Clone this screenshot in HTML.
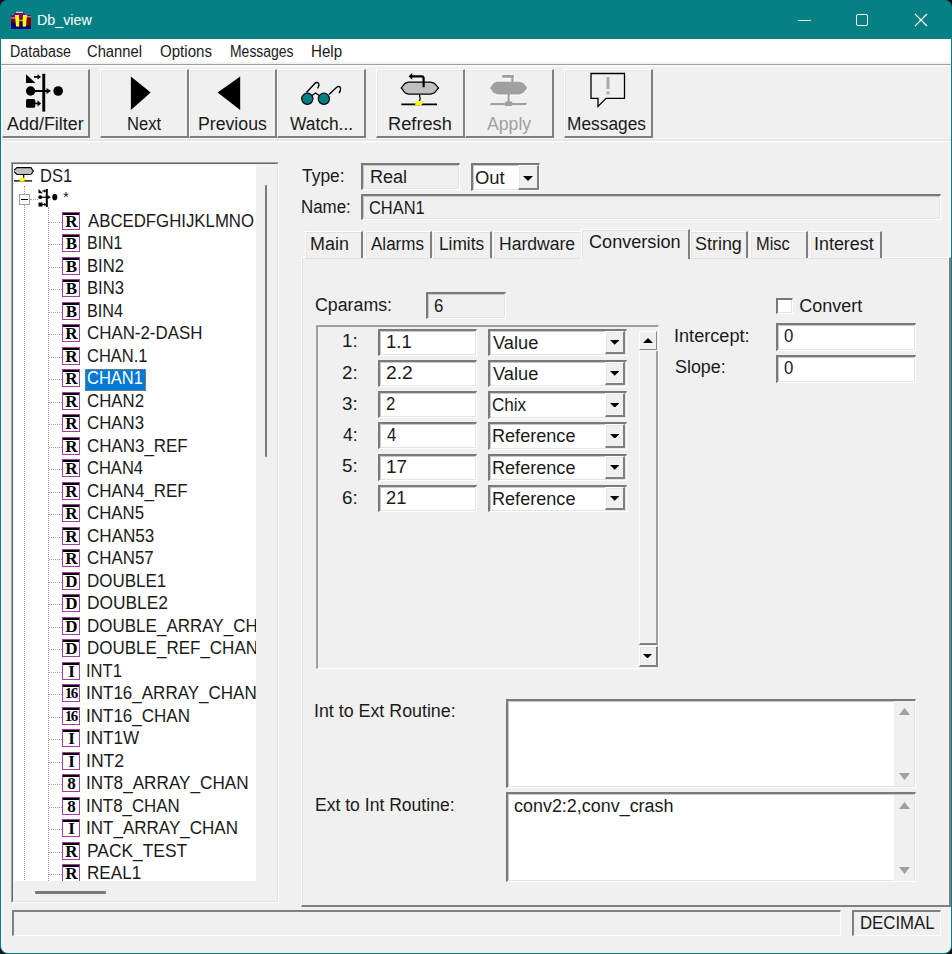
<!DOCTYPE html>
<html><head><meta charset="utf-8"><style>
html,body{margin:0;padding:0;width:952px;height:954px;overflow:hidden;background:#141418}
.t{position:absolute;font-family:"Liberation Sans", sans-serif;white-space:pre}
#win{position:absolute;left:0;top:0;width:952px;height:954px;box-sizing:border-box;background:#f0f0f0;border:1px solid #058084;border-radius:8px}
#title{position:absolute;left:0;top:0;width:952px;height:39px;background:#058084;border-radius:8px 8px 0 0}
</style></head><body>
<div id="win"></div><div id="title"></div><svg style="position:absolute;left:8px;top:8px" width="28" height="24" viewBox="0 0 28 24">
<rect x="3" y="7" width="20" height="14" fill="#800000"/>
<rect x="3" y="7" width="5" height="3" fill="#800080"/>
<rect x="3" y="9.6" width="5" height="0.9" fill="#f0c0f0"/>
<path d="M8 4H15L17.5 7H19.5V9H6V7z" fill="#800080"/>
<rect x="8" y="3.8" width="7" height="1" fill="#f8e8f8"/>
<rect x="19" y="7" width="4" height="1.6" fill="#800080"/>
<rect x="19" y="8.4" width="4" height="0.8" fill="#f0c0f0"/>
<path d="M3 21V14.5H8V18.5H19V17.8H23V21z" fill="#000080"/>
<rect x="11.2" y="10" width="3.5" height="1.8" fill="#800000"/><rect x="11.2" y="11.8" width="3.5" height="0.8" fill="#fff"/>
<rect x="11.2" y="12.6" width="3.5" height="0.9" fill="#60c040"/>
<rect x="11.2" y="13.5" width="3.5" height="5" fill="#000080"/>
<path d="M7 7H11.2V18.5H8z M14.7 7H19L18 18.5H14.7z" fill="#ffff00"/>
<rect x="11.2" y="7" width="3.5" height="3" fill="#800080"/>
</svg><div class="t" style="left:36.75px;top:11.60px;font-size:15px;line-height:15px;color:#fff;transform:scaleX(0.9526);transform-origin:0 0;">Db_view</div><div style="position:absolute;left:798px;top:19.5px;width:13px;height:1px;box-sizing:border-box;background:#fff"></div><div style="position:absolute;left:856px;top:14px;width:12px;height:12px;box-sizing:border-box;border:1px solid #fff;border-radius:2px"></div><svg style="position:absolute;left:914px;top:13px" width="14" height="14" viewBox="0 0 14 14"><path d="M1 1L13 13M13 1L1 13" stroke="#fff" stroke-width="1.1"/></svg><div style="position:absolute;left:1px;top:39px;width:950px;height:25px;box-sizing:border-box;background:linear-gradient(#fff 0px,#fff 21.5px,#f0f0f0 24.5px)"></div><div style="position:absolute;left:1px;top:64px;width:950px;height:1px;box-sizing:border-box;background:#a0a0a0"></div><div class="t" style="left:9.51px;top:43.76px;font-size:16px;line-height:16px;color:#1a1a1a;transform:scaleX(0.8896);transform-origin:0 0;">Database</div><div class="t" style="left:86.98px;top:43.76px;font-size:16px;line-height:16px;color:#1a1a1a;transform:scaleX(0.9224);transform-origin:0 0;">Channel</div><div class="t" style="left:159.76px;top:43.76px;font-size:16px;line-height:16px;color:#1a1a1a;transform:scaleX(0.9426);transform-origin:0 0;">Options</div><div class="t" style="left:229.63px;top:43.76px;font-size:16px;line-height:16px;color:#1a1a1a;transform:scaleX(0.8722);transform-origin:0 0;">Messages</div><div class="t" style="left:310.85px;top:43.76px;font-size:16px;line-height:16px;color:#1a1a1a;transform:scaleX(0.9452);transform-origin:0 0;">Help</div><div style="position:absolute;left:1px;top:65px;width:950px;height:1.5px;box-sizing:border-box;background:#f8f8f8"></div><div style="position:absolute;left:1px;top:138px;width:950px;height:1px;box-sizing:border-box;background:#f8f8f8"></div><div style="position:absolute;left:1px;top:139px;width:950px;height:2px;box-sizing:border-box;background:#e6e6e6"></div><div style="position:absolute;left:1px;top:141px;width:950px;height:1px;box-sizing:border-box;background:#fff"></div><div style="position:absolute;left:2px;top:69px;width:88px;height:69px;box-sizing:border-box;background:#f0f0f0;border-top:1px solid #fff;border-left:1px solid #fff;border-right:2px solid #808080;border-bottom:2px solid #808080;box-shadow:inset 1px 1px 0 #e8e8e8"></div><div class="t" style="left:6.80px;top:114.76px;font-size:18px;line-height:18px;color:#1a1a1a;transform:scaleX(0.9961);transform-origin:0 0;">Add/Filter</div><div style="position:absolute;left:100px;top:69px;width:89px;height:69px;box-sizing:border-box;background:#f0f0f0;border-top:1px solid #fff;border-left:1px solid #fff;border-right:2px solid #808080;border-bottom:2px solid #808080;box-shadow:inset 1px 1px 0 #e8e8e8"></div><div class="t" style="left:126.58px;top:114.76px;font-size:18px;line-height:18px;color:#1a1a1a;transform:scaleX(0.9222);transform-origin:0 0;">Next</div><div style="position:absolute;left:189px;top:69px;width:88px;height:69px;box-sizing:border-box;background:#f0f0f0;border-top:1px solid #fff;border-left:1px solid #fff;border-right:2px solid #808080;border-bottom:2px solid #808080;box-shadow:inset 1px 1px 0 #e8e8e8"></div><div class="t" style="left:198.02px;top:114.76px;font-size:18px;line-height:18px;color:#1a1a1a;transform:scaleX(0.9826);transform-origin:0 0;">Previous</div><div style="position:absolute;left:277px;top:69px;width:89px;height:69px;box-sizing:border-box;background:#f0f0f0;border-top:1px solid #fff;border-left:1px solid #fff;border-right:2px solid #808080;border-bottom:2px solid #808080;box-shadow:inset 1px 1px 0 #e8e8e8"></div><div class="t" style="left:290.20px;top:114.76px;font-size:18px;line-height:18px;color:#1a1a1a;transform:scaleX(0.9656);transform-origin:0 0;">Watch...</div><div style="position:absolute;left:376px;top:69px;width:89px;height:69px;box-sizing:border-box;background:#f0f0f0;border-top:1px solid #fff;border-left:1px solid #fff;border-right:2px solid #808080;border-bottom:2px solid #808080;box-shadow:inset 1px 1px 0 #e8e8e8"></div><div class="t" style="left:387.79px;top:114.76px;font-size:18px;line-height:18px;color:#1a1a1a;transform:scaleX(1.0131);transform-origin:0 0;">Refresh</div><div style="position:absolute;left:465px;top:69px;width:89px;height:69px;box-sizing:border-box;background:#f0f0f0;border-top:1px solid #fff;border-left:1px solid #fff;border-right:2px solid #808080;border-bottom:2px solid #808080;box-shadow:inset 1px 1px 0 #e8e8e8"></div><div class="t" style="left:487.40px;top:114.76px;font-size:18px;line-height:18px;color:#a0a0a0;transform:scaleX(0.9800);transform-origin:0 0;">Apply</div><div style="position:absolute;left:564px;top:69px;width:89px;height:69px;box-sizing:border-box;background:#f0f0f0;border-top:1px solid #fff;border-left:1px solid #fff;border-right:2px solid #808080;border-bottom:2px solid #808080;box-shadow:inset 1px 1px 0 #e8e8e8"></div><div class="t" style="left:567.24px;top:114.76px;font-size:18px;line-height:18px;color:#1a1a1a;transform:scaleX(0.9630);transform-origin:0 0;">Messages</div><svg style="position:absolute;left:20px;top:70px" width="50" height="42" viewBox="0 0 50 42">
<path d="M6 4.2L15.5 12.9H6z" fill="#000"/>
<path d="M14 6.9h4.5" stroke="#000" stroke-width="1.8"/><path d="M17.5 4.3l3.6 2.6-3.6 2.6z" fill="#000"/>
<rect x="22.3" y="3.8" width="2.9" height="37.8" fill="#000"/>
<circle cx="10.6" cy="21" r="4.7" fill="#000"/>
<path d="M14 21h14" stroke="#000" stroke-width="2"/><path d="M26.5 17.9l4.5 3.1-4.5 3.1z" fill="#000"/>
<circle cx="38.2" cy="21" r="4.8" fill="#000"/>
<rect x="6" y="29.1" width="9.2" height="8.7" rx="1.5" fill="#000"/>
<path d="M14 33.4h5" stroke="#000" stroke-width="1.8"/><path d="M17.5 30.3l3.6 3.1-3.6 3.1z" fill="#000"/>
</svg><svg style="position:absolute;left:130px;top:76px" width="24" height="36" viewBox="0 0 24 36"><path d="M0.9 0.6L20.7 16.5L0.9 33.9z" fill="#000"/></svg><svg style="position:absolute;left:217px;top:76px" width="24" height="36" viewBox="0 0 24 36"><path d="M0.6 16.5L23.2 0.6V33.9z" fill="#000"/></svg><svg style="position:absolute;left:296px;top:80px" width="50" height="30" viewBox="0 0 50 30">
<path d="M10.5 12.5L19 3.2Q21.5 1.5 22.8 4Q23.5 6.5 21.5 8.5" fill="none" stroke="#000" stroke-width="1.4"/>
<path d="M33 14.5L41 7Q43.5 5.5 44.5 8Q45 10.5 43 13" fill="none" stroke="#000" stroke-width="1.4"/>
<path d="M16 15.5L19.6 13L23.2 15.5" fill="none" stroke="#000" stroke-width="1.3"/>
<circle cx="11.3" cy="18.8" r="5.6" fill="#008080" stroke="#000" stroke-width="1.2"/>
<circle cx="27.9" cy="18.8" r="5.6" fill="#008080" stroke="#000" stroke-width="1.2"/>
</svg><svg style="position:absolute;left:396px;top:70px" width="50" height="40" viewBox="0 0 50 40">
<path d="M12.1 12.1H34.7L38.5 13.3L42.5 17.9L38.5 22.8L34.7 24.2H12.1L9 22.8L5.3 17.9L9 13.3z" fill="#c0c0c0" stroke="#000" stroke-width="1.3"/>
<path d="M27.6 17.3V8.3Q27.6 6.3 25.6 6.3H15.5" fill="none" stroke="#000" stroke-width="2.2"/>
<path d="M16.2 2.9L12.6 6.3L16.2 9.7z" fill="#000"/>
<path d="M23.6 24.5Q23.6 27 24.2 28.5Q24.5 30 23 31" fill="none" stroke="#000" stroke-width="1.3"/>
<path d="M5.3 34.4H41" stroke="#000" stroke-width="1.8"/>
<path d="M20.5 31.2H27.8L25.3 35.3H18.9z" fill="#ffff00"/>
</svg><svg style="position:absolute;left:485px;top:70px" width="50" height="40" viewBox="0 0 50 40">
<g fill="#fff" transform="translate(1,1)"><path d="M11.3 11.8H34.7L38.5 13.3L42.3 17.9L38.5 22.8L34.7 24.4H12.6L8.5 22.8L5 17.9L8.5 13.3z"/>
<rect x="26.3" y="5" width="2.3" height="7.5"/><rect x="17.3" y="5" width="11.3" height="2.8"/>
<rect x="22.6" y="24" width="2.1" height="8.5"/>
<path d="M6 33.1H42L41 35.2H5z"/>
<rect x="20.2" y="31.5" width="7.1" height="4.7"/></g><g fill="#a0a0a0"><path d="M11.3 11.8H34.7L38.5 13.3L42.3 17.9L38.5 22.8L34.7 24.4H12.6L8.5 22.8L5 17.9L8.5 13.3z"/>
<rect x="26.3" y="5" width="2.3" height="7.5"/><rect x="17.3" y="5" width="11.3" height="2.8"/>
<rect x="22.6" y="24" width="2.1" height="8.5"/>
<path d="M6 33.1H42L41 35.2H5z"/>
<rect x="20.2" y="31.5" width="7.1" height="4.7"/></g>
</svg><svg style="position:absolute;left:585px;top:70px" width="50" height="40" viewBox="0 0 50 40">
<path d="M6 3.5H39.5V28.3H21L13 36.5V28.3H6z" fill="none" stroke="#000" stroke-width="1.3"/>
<rect x="21.5" y="7" width="3" height="12" fill="#a8a8a8"/>
<rect x="21.5" y="21.5" width="3" height="3" fill="#a8a8a8"/>
</svg><div style="position:absolute;left:11px;top:161.5px;width:267.5px;height:741.5px;box-sizing:border-box;background:#f0f0f0;border-top:2px solid #a0a0a0;border-left:2px solid #a0a0a0;border-right:2px solid #fafafa;border-bottom:2px solid #fafafa"></div><div style="position:absolute;left:12px;top:162.5px;width:265.5px;height:739.5px;box-sizing:border-box;border-top:1.5px solid #696969;border-left:1px solid #696969;border-right:1px solid #e3e3e3;border-bottom:1px solid #e3e3e3"></div><div id="tree" style="position:absolute;left:14px;top:165px;width:242px;height:716px;background:#fff;overflow:hidden"><svg style="position:absolute;left:-2px;top:0px" width="24" height="20" viewBox="0 0 24 20">
<path d="M5 2.6H18.9L21.4 6.1L18.9 9.5H5L1.2 6.1z" fill="#c0c0c0" stroke="#000" stroke-width="1.1"/>
<path d="M11.7 9.5V13" stroke="#000" stroke-width="1.2"/>
<path d="M1.2 15.9H20.1" stroke="#000" stroke-width="1.3"/>
<path d="M8.3 12.7H13.2L12.4 16.5H7.5z" fill="#ffff00"/></svg><div class="t" style="left:26.08px;top:2.26px;font-size:18px;line-height:18px;color:#1a1a1a;transform:scaleX(0.9152);transform-origin:0 0;">DS1</div><div style="position:absolute;left:10px;top:21px;width:1px;height:716px;box-sizing:border-box;border-left:1px dotted #a0a0a0"></div><div style="position:absolute;left:34px;top:42px;width:1px;height:700px;box-sizing:border-box;border-left:1px dotted #a0a0a0"></div><div style="position:absolute;left:5px;top:29px;width:11px;height:11px;box-sizing:border-box;background:#fff;border:1px solid #a0a0a0"></div><div style="position:absolute;left:7px;top:34px;width:7px;height:1.3px;box-sizing:border-box;background:#000"></div><div style="position:absolute;left:16px;top:34px;width:8px;height:1px;box-sizing:border-box;border-top:1px dotted #a0a0a0"></div><svg style="position:absolute;left:22px;top:22px" width="24" height="22" viewBox="0 0 24 22">
<path d="M2.5 2L6.8 6.2H2.5z" fill="#000"/>
<path d="M6.3 4h2.5" stroke="#000" stroke-width="1.2"/><path d="M8.2 2.3l2.2 1.7-2.2 1.7z" fill="#000"/>
<rect x="9.8" y="2" width="2" height="18" fill="#000"/>
<circle cx="4.2" cy="10.2" r="1.9" fill="#000"/>
<path d="M5 10.2h8" stroke="#000" stroke-width="1.2"/><path d="M12.2 8.3l2.5 1.9-2.5 1.9z" fill="#000"/>
<ellipse cx="18.8" cy="10.2" rx="2.5" ry="3.1" fill="#000"/>
<rect x="2.5" y="15.5" width="4" height="4" fill="#000"/>
<path d="M6 17.5h3" stroke="#000" stroke-width="1.2"/><path d="M8.2 15.8l2.2 1.7-2.2 1.7z" fill="#000"/></svg><div class="t" style="left:49.00px;top:23.80px;font-size:15px;line-height:15px;color:#1a1a1a;">*</div><div style="position:absolute;left:35px;top:56.69999999999999px;width:13px;height:1px;box-sizing:border-box;border-top:1px dotted #a0a0a0"></div><div style="position:absolute;left:48px;top:46.69999999999999px;width:18px;height:18px;box-sizing:border-box;background:#fff;border:1.5px solid #a040a0;box-shadow:inset 0 2px 0 #000"></div><div style="position:absolute;left:48.5px;top:46.499999999999986px;width:18px;height:18px;text-align:center;font-family:'Liberation Serif',serif;font-weight:bold;font-size:17px;line-height:19px;color:#000;letter-spacing:0;text-indent:0">R</div><div class="t" style="left:73.90px;top:46.96px;font-size:18px;line-height:18px;color:#1a1a1a;transform:scaleX(0.9328);transform-origin:0 0;">ABCEDFGHIJKLMNO</div><div style="position:absolute;left:35px;top:79.19999999999999px;width:13px;height:1px;box-sizing:border-box;border-top:1px dotted #a0a0a0"></div><div style="position:absolute;left:48px;top:69.19999999999999px;width:18px;height:18px;box-sizing:border-box;background:#fff;border:1.5px solid #a040a0;box-shadow:inset 0 2px 0 #000"></div><div style="position:absolute;left:48.5px;top:68.99999999999999px;width:18px;height:18px;text-align:center;font-family:'Liberation Serif',serif;font-weight:bold;font-size:17px;line-height:19px;color:#000;letter-spacing:0;text-indent:0">B</div><div class="t" style="left:73.01px;top:68.96px;font-size:18px;line-height:18px;color:#1a1a1a;transform:scaleX(0.8868);transform-origin:0 0;">BIN1</div><div style="position:absolute;left:35px;top:101.69999999999999px;width:13px;height:1px;box-sizing:border-box;border-top:1px dotted #a0a0a0"></div><div style="position:absolute;left:48px;top:91.69999999999999px;width:18px;height:18px;box-sizing:border-box;background:#fff;border:1.5px solid #a040a0;box-shadow:inset 0 2px 0 #000"></div><div style="position:absolute;left:48.5px;top:91.49999999999999px;width:18px;height:18px;text-align:center;font-family:'Liberation Serif',serif;font-weight:bold;font-size:17px;line-height:19px;color:#000;letter-spacing:0;text-indent:0">B</div><div class="t" style="left:72.97px;top:91.96px;font-size:18px;line-height:18px;color:#1a1a1a;transform:scaleX(0.9263);transform-origin:0 0;">BIN2</div><div style="position:absolute;left:35px;top:124.19999999999999px;width:13px;height:1px;box-sizing:border-box;border-top:1px dotted #a0a0a0"></div><div style="position:absolute;left:48px;top:114.19999999999999px;width:18px;height:18px;box-sizing:border-box;background:#fff;border:1.5px solid #a040a0;box-shadow:inset 0 2px 0 #000"></div><div style="position:absolute;left:48.5px;top:113.99999999999999px;width:18px;height:18px;text-align:center;font-family:'Liberation Serif',serif;font-weight:bold;font-size:17px;line-height:19px;color:#000;letter-spacing:0;text-indent:0">B</div><div class="t" style="left:72.97px;top:113.96px;font-size:18px;line-height:18px;color:#1a1a1a;transform:scaleX(0.9263);transform-origin:0 0;">BIN3</div><div style="position:absolute;left:35px;top:146.7px;width:13px;height:1px;box-sizing:border-box;border-top:1px dotted #a0a0a0"></div><div style="position:absolute;left:48px;top:136.7px;width:18px;height:18px;box-sizing:border-box;background:#fff;border:1.5px solid #a040a0;box-shadow:inset 0 2px 0 #000"></div><div style="position:absolute;left:48.5px;top:136.5px;width:18px;height:18px;text-align:center;font-family:'Liberation Serif',serif;font-weight:bold;font-size:17px;line-height:19px;color:#000;letter-spacing:0;text-indent:0">B</div><div class="t" style="left:73.00px;top:136.96px;font-size:18px;line-height:18px;color:#1a1a1a;transform:scaleX(0.9026);transform-origin:0 0;">BIN4</div><div style="position:absolute;left:35px;top:169.2px;width:13px;height:1px;box-sizing:border-box;border-top:1px dotted #a0a0a0"></div><div style="position:absolute;left:48px;top:159.2px;width:18px;height:18px;box-sizing:border-box;background:#fff;border:1.5px solid #a040a0;box-shadow:inset 0 2px 0 #000"></div><div style="position:absolute;left:48.5px;top:159.0px;width:18px;height:18px;text-align:center;font-family:'Liberation Serif',serif;font-weight:bold;font-size:17px;line-height:19px;color:#000;letter-spacing:0;text-indent:0">R</div><div class="t" style="left:72.96px;top:158.96px;font-size:18px;line-height:18px;color:#1a1a1a;transform:scaleX(0.9380);transform-origin:0 0;">CHAN-2-DASH</div><div style="position:absolute;left:35px;top:191.7px;width:13px;height:1px;box-sizing:border-box;border-top:1px dotted #a0a0a0"></div><div style="position:absolute;left:48px;top:181.7px;width:18px;height:18px;box-sizing:border-box;background:#fff;border:1.5px solid #a040a0;box-shadow:inset 0 2px 0 #000"></div><div style="position:absolute;left:48.5px;top:181.5px;width:18px;height:18px;text-align:center;font-family:'Liberation Serif',serif;font-weight:bold;font-size:17px;line-height:19px;color:#000;letter-spacing:0;text-indent:0">R</div><div class="t" style="left:72.98px;top:181.96px;font-size:18px;line-height:18px;color:#1a1a1a;transform:scaleX(0.9156);transform-origin:0 0;">CHAN.1</div><div style="position:absolute;left:35px;top:214.2px;width:13px;height:1px;box-sizing:border-box;border-top:1px dotted #a0a0a0"></div><div style="position:absolute;left:48px;top:204.2px;width:18px;height:18px;box-sizing:border-box;background:#fff;border:1.5px solid #a040a0;box-shadow:inset 0 2px 0 #000"></div><div style="position:absolute;left:48.5px;top:204.0px;width:18px;height:18px;text-align:center;font-family:'Liberation Serif',serif;font-weight:bold;font-size:17px;line-height:19px;color:#000;letter-spacing:0;text-indent:0">R</div><div style="position:absolute;left:71.3px;top:203.7px;width:61px;height:22.7px;box-sizing:border-box;background:#0078d7;outline:1px dotted #c08040;outline-offset:-1px"></div><div class="t" style="left:72.98px;top:203.96px;font-size:18px;line-height:18px;color:#fff;transform:scaleX(0.9169);transform-origin:0 0;">CHAN1</div><div style="position:absolute;left:35px;top:236.7px;width:13px;height:1px;box-sizing:border-box;border-top:1px dotted #a0a0a0"></div><div style="position:absolute;left:48px;top:226.7px;width:18px;height:18px;box-sizing:border-box;background:#fff;border:1.5px solid #a040a0;box-shadow:inset 0 2px 0 #000"></div><div style="position:absolute;left:48.5px;top:226.5px;width:18px;height:18px;text-align:center;font-family:'Liberation Serif',serif;font-weight:bold;font-size:17px;line-height:19px;color:#000;letter-spacing:0;text-indent:0">R</div><div class="t" style="left:72.97px;top:226.96px;font-size:18px;line-height:18px;color:#1a1a1a;transform:scaleX(0.9339);transform-origin:0 0;">CHAN2</div><div style="position:absolute;left:35px;top:259.2px;width:13px;height:1px;box-sizing:border-box;border-top:1px dotted #a0a0a0"></div><div style="position:absolute;left:48px;top:249.2px;width:18px;height:18px;box-sizing:border-box;background:#fff;border:1.5px solid #a040a0;box-shadow:inset 0 2px 0 #000"></div><div style="position:absolute;left:48.5px;top:249.0px;width:18px;height:18px;text-align:center;font-family:'Liberation Serif',serif;font-weight:bold;font-size:17px;line-height:19px;color:#000;letter-spacing:0;text-indent:0">R</div><div class="t" style="left:72.97px;top:248.96px;font-size:18px;line-height:18px;color:#1a1a1a;transform:scaleX(0.9339);transform-origin:0 0;">CHAN3</div><div style="position:absolute;left:35px;top:281.7px;width:13px;height:1px;box-sizing:border-box;border-top:1px dotted #a0a0a0"></div><div style="position:absolute;left:48px;top:271.7px;width:18px;height:18px;box-sizing:border-box;background:#fff;border:1.5px solid #a040a0;box-shadow:inset 0 2px 0 #000"></div><div style="position:absolute;left:48.5px;top:271.5px;width:18px;height:18px;text-align:center;font-family:'Liberation Serif',serif;font-weight:bold;font-size:17px;line-height:19px;color:#000;letter-spacing:0;text-indent:0">R</div><div class="t" style="left:72.96px;top:271.96px;font-size:18px;line-height:18px;color:#1a1a1a;transform:scaleX(0.9406);transform-origin:0 0;">CHAN3_REF</div><div style="position:absolute;left:35px;top:304.2px;width:13px;height:1px;box-sizing:border-box;border-top:1px dotted #a0a0a0"></div><div style="position:absolute;left:48px;top:294.2px;width:18px;height:18px;box-sizing:border-box;background:#fff;border:1.5px solid #a040a0;box-shadow:inset 0 2px 0 #000"></div><div style="position:absolute;left:48.5px;top:294.0px;width:18px;height:18px;text-align:center;font-family:'Liberation Serif',serif;font-weight:bold;font-size:17px;line-height:19px;color:#000;letter-spacing:0;text-indent:0">R</div><div class="t" style="left:72.98px;top:293.96px;font-size:18px;line-height:18px;color:#1a1a1a;transform:scaleX(0.9183);transform-origin:0 0;">CHAN4</div><div style="position:absolute;left:35px;top:326.7px;width:13px;height:1px;box-sizing:border-box;border-top:1px dotted #a0a0a0"></div><div style="position:absolute;left:48px;top:316.7px;width:18px;height:18px;box-sizing:border-box;background:#fff;border:1.5px solid #a040a0;box-shadow:inset 0 2px 0 #000"></div><div style="position:absolute;left:48.5px;top:316.5px;width:18px;height:18px;text-align:center;font-family:'Liberation Serif',serif;font-weight:bold;font-size:17px;line-height:19px;color:#000;letter-spacing:0;text-indent:0">R</div><div class="t" style="left:72.96px;top:316.96px;font-size:18px;line-height:18px;color:#1a1a1a;transform:scaleX(0.9406);transform-origin:0 0;">CHAN4_REF</div><div style="position:absolute;left:35px;top:349.20000000000005px;width:13px;height:1px;box-sizing:border-box;border-top:1px dotted #a0a0a0"></div><div style="position:absolute;left:48px;top:339.2px;width:18px;height:18px;box-sizing:border-box;background:#fff;border:1.5px solid #a040a0;box-shadow:inset 0 2px 0 #000"></div><div style="position:absolute;left:48.5px;top:339.0px;width:18px;height:18px;text-align:center;font-family:'Liberation Serif',serif;font-weight:bold;font-size:17px;line-height:19px;color:#000;letter-spacing:0;text-indent:0">R</div><div class="t" style="left:72.97px;top:338.96px;font-size:18px;line-height:18px;color:#1a1a1a;transform:scaleX(0.9339);transform-origin:0 0;">CHAN5</div><div style="position:absolute;left:35px;top:371.70000000000005px;width:13px;height:1px;box-sizing:border-box;border-top:1px dotted #a0a0a0"></div><div style="position:absolute;left:48px;top:361.70000000000005px;width:18px;height:18px;box-sizing:border-box;background:#fff;border:1.5px solid #a040a0;box-shadow:inset 0 2px 0 #000"></div><div style="position:absolute;left:48.5px;top:361.50000000000006px;width:18px;height:18px;text-align:center;font-family:'Liberation Serif',serif;font-weight:bold;font-size:17px;line-height:19px;color:#000;letter-spacing:0;text-indent:0">R</div><div class="t" style="left:72.95px;top:361.96px;font-size:18px;line-height:18px;color:#1a1a1a;transform:scaleX(0.9478);transform-origin:0 0;">CHAN53</div><div style="position:absolute;left:35px;top:394.20000000000005px;width:13px;height:1px;box-sizing:border-box;border-top:1px dotted #a0a0a0"></div><div style="position:absolute;left:48px;top:384.20000000000005px;width:18px;height:18px;box-sizing:border-box;background:#fff;border:1.5px solid #a040a0;box-shadow:inset 0 2px 0 #000"></div><div style="position:absolute;left:48.5px;top:384.00000000000006px;width:18px;height:18px;text-align:center;font-family:'Liberation Serif',serif;font-weight:bold;font-size:17px;line-height:19px;color:#000;letter-spacing:0;text-indent:0">R</div><div class="t" style="left:72.96px;top:383.96px;font-size:18px;line-height:18px;color:#1a1a1a;transform:scaleX(0.9391);transform-origin:0 0;">CHAN57</div><div style="position:absolute;left:35px;top:416.70000000000005px;width:13px;height:1px;box-sizing:border-box;border-top:1px dotted #a0a0a0"></div><div style="position:absolute;left:48px;top:406.70000000000005px;width:18px;height:18px;box-sizing:border-box;background:#fff;border:1.5px solid #a040a0;box-shadow:inset 0 2px 0 #000"></div><div style="position:absolute;left:48.5px;top:406.50000000000006px;width:18px;height:18px;text-align:center;font-family:'Liberation Serif',serif;font-weight:bold;font-size:17px;line-height:19px;color:#000;letter-spacing:0;text-indent:0">D</div><div class="t" style="left:72.96px;top:406.96px;font-size:18px;line-height:18px;color:#1a1a1a;transform:scaleX(0.9439);transform-origin:0 0;">DOUBLE1</div><div style="position:absolute;left:35px;top:439.20000000000005px;width:13px;height:1px;box-sizing:border-box;border-top:1px dotted #a0a0a0"></div><div style="position:absolute;left:48px;top:429.20000000000005px;width:18px;height:18px;box-sizing:border-box;background:#fff;border:1.5px solid #a040a0;box-shadow:inset 0 2px 0 #000"></div><div style="position:absolute;left:48.5px;top:429.00000000000006px;width:18px;height:18px;text-align:center;font-family:'Liberation Serif',serif;font-weight:bold;font-size:17px;line-height:19px;color:#000;letter-spacing:0;text-indent:0">D</div><div class="t" style="left:72.94px;top:428.96px;font-size:18px;line-height:18px;color:#1a1a1a;transform:scaleX(0.9634);transform-origin:0 0;">DOUBLE2</div><div style="position:absolute;left:35px;top:461.70000000000005px;width:13px;height:1px;box-sizing:border-box;border-top:1px dotted #a0a0a0"></div><div style="position:absolute;left:48px;top:451.70000000000005px;width:18px;height:18px;box-sizing:border-box;background:#fff;border:1.5px solid #a040a0;box-shadow:inset 0 2px 0 #000"></div><div style="position:absolute;left:48.5px;top:451.50000000000006px;width:18px;height:18px;text-align:center;font-family:'Liberation Serif',serif;font-weight:bold;font-size:17px;line-height:19px;color:#000;letter-spacing:0;text-indent:0">D</div><div class="t" style="left:72.96px;top:451.96px;font-size:18px;line-height:18px;color:#1a1a1a;transform:scaleX(0.9446);transform-origin:0 0;">DOUBLE_ARRAY_CHAN</div><div style="position:absolute;left:35px;top:484.20000000000005px;width:13px;height:1px;box-sizing:border-box;border-top:1px dotted #a0a0a0"></div><div style="position:absolute;left:48px;top:474.20000000000005px;width:18px;height:18px;box-sizing:border-box;background:#fff;border:1.5px solid #a040a0;box-shadow:inset 0 2px 0 #000"></div><div style="position:absolute;left:48.5px;top:474.00000000000006px;width:18px;height:18px;text-align:center;font-family:'Liberation Serif',serif;font-weight:bold;font-size:17px;line-height:19px;color:#000;letter-spacing:0;text-indent:0">D</div><div class="t" style="left:72.96px;top:473.96px;font-size:18px;line-height:18px;color:#1a1a1a;transform:scaleX(0.9446);transform-origin:0 0;">DOUBLE_REF_CHAN</div><div style="position:absolute;left:35px;top:506.70000000000005px;width:13px;height:1px;box-sizing:border-box;border-top:1px dotted #a0a0a0"></div><div style="position:absolute;left:48px;top:496.70000000000005px;width:18px;height:18px;box-sizing:border-box;background:#fff;border:1.5px solid #a040a0;box-shadow:inset 0 2px 0 #000"></div><div style="position:absolute;left:48.5px;top:496.50000000000006px;width:18px;height:18px;text-align:center;font-family:'Liberation Serif',serif;font-weight:bold;font-size:17px;line-height:19px;color:#000;letter-spacing:0;text-indent:0">I</div><div class="t" style="left:72.06px;top:496.96px;font-size:18px;line-height:18px;color:#1a1a1a;transform:scaleX(0.9222);transform-origin:0 0;">INT1</div><div style="position:absolute;left:35px;top:529.2px;width:13px;height:1px;box-sizing:border-box;border-top:1px dotted #a0a0a0"></div><div style="position:absolute;left:48px;top:519.2px;width:18px;height:18px;box-sizing:border-box;background:#fff;border:1.5px solid #a040a0;box-shadow:inset 0 2px 0 #000"></div><div style="position:absolute;left:48.5px;top:519.0px;width:18px;height:18px;text-align:center;font-family:'Liberation Serif',serif;font-weight:bold;font-size:15px;line-height:19px;color:#000;letter-spacing:-1.5px;text-indent:-1.5px">16</div><div class="t" style="left:72.01px;top:518.96px;font-size:18px;line-height:18px;color:#1a1a1a;transform:scaleX(0.9446);transform-origin:0 0;">INT16_ARRAY_CHAN</div><div style="position:absolute;left:35px;top:551.7px;width:13px;height:1px;box-sizing:border-box;border-top:1px dotted #a0a0a0"></div><div style="position:absolute;left:48px;top:541.7px;width:18px;height:18px;box-sizing:border-box;background:#fff;border:1.5px solid #a040a0;box-shadow:inset 0 2px 0 #000"></div><div style="position:absolute;left:48.5px;top:541.5px;width:18px;height:18px;text-align:center;font-family:'Liberation Serif',serif;font-weight:bold;font-size:15px;line-height:19px;color:#000;letter-spacing:-1.5px;text-indent:-1.5px">16</div><div class="t" style="left:72.01px;top:541.96px;font-size:18px;line-height:18px;color:#1a1a1a;transform:scaleX(0.9449);transform-origin:0 0;">INT16_CHAN</div><div style="position:absolute;left:35px;top:574.2px;width:13px;height:1px;box-sizing:border-box;border-top:1px dotted #a0a0a0"></div><div style="position:absolute;left:48px;top:564.2px;width:18px;height:18px;box-sizing:border-box;background:#fff;border:1.5px solid #a040a0;box-shadow:inset 0 2px 0 #000"></div><div style="position:absolute;left:48.5px;top:564.0px;width:18px;height:18px;text-align:center;font-family:'Liberation Serif',serif;font-weight:bold;font-size:17px;line-height:19px;color:#000;letter-spacing:0;text-indent:0">I</div><div class="t" style="left:72.00px;top:563.96px;font-size:18px;line-height:18px;color:#1a1a1a;transform:scaleX(0.9500);transform-origin:0 0;">INT1W</div><div style="position:absolute;left:35px;top:596.7px;width:13px;height:1px;box-sizing:border-box;border-top:1px dotted #a0a0a0"></div><div style="position:absolute;left:48px;top:586.7px;width:18px;height:18px;box-sizing:border-box;background:#fff;border:1.5px solid #a040a0;box-shadow:inset 0 2px 0 #000"></div><div style="position:absolute;left:48.5px;top:586.5px;width:18px;height:18px;text-align:center;font-family:'Liberation Serif',serif;font-weight:bold;font-size:17px;line-height:19px;color:#000;letter-spacing:0;text-indent:0">I</div><div class="t" style="left:71.94px;top:586.96px;font-size:18px;line-height:18px;color:#1a1a1a;transform:scaleX(0.9778);transform-origin:0 0;">INT2</div><div style="position:absolute;left:35px;top:619.2px;width:13px;height:1px;box-sizing:border-box;border-top:1px dotted #a0a0a0"></div><div style="position:absolute;left:48px;top:609.2px;width:18px;height:18px;box-sizing:border-box;background:#fff;border:1.5px solid #a040a0;box-shadow:inset 0 2px 0 #000"></div><div style="position:absolute;left:48.5px;top:609.0px;width:18px;height:18px;text-align:center;font-family:'Liberation Serif',serif;font-weight:bold;font-size:17px;line-height:19px;color:#000;letter-spacing:0;text-indent:0">8</div><div class="t" style="left:72.00px;top:608.96px;font-size:18px;line-height:18px;color:#1a1a1a;transform:scaleX(0.9524);transform-origin:0 0;">INT8_ARRAY_CHAN</div><div style="position:absolute;left:35px;top:641.7px;width:13px;height:1px;box-sizing:border-box;border-top:1px dotted #a0a0a0"></div><div style="position:absolute;left:48px;top:631.7px;width:18px;height:18px;box-sizing:border-box;background:#fff;border:1.5px solid #a040a0;box-shadow:inset 0 2px 0 #000"></div><div style="position:absolute;left:48.5px;top:631.5px;width:18px;height:18px;text-align:center;font-family:'Liberation Serif',serif;font-weight:bold;font-size:17px;line-height:19px;color:#000;letter-spacing:0;text-indent:0">8</div><div class="t" style="left:72.03px;top:631.96px;font-size:18px;line-height:18px;color:#1a1a1a;transform:scaleX(0.9361);transform-origin:0 0;">INT8_CHAN</div><div style="position:absolute;left:35px;top:664.2px;width:13px;height:1px;box-sizing:border-box;border-top:1px dotted #a0a0a0"></div><div style="position:absolute;left:48px;top:654.2px;width:18px;height:18px;box-sizing:border-box;background:#fff;border:1.5px solid #a040a0;box-shadow:inset 0 2px 0 #000"></div><div style="position:absolute;left:48.5px;top:654.0px;width:18px;height:18px;text-align:center;font-family:'Liberation Serif',serif;font-weight:bold;font-size:17px;line-height:19px;color:#000;letter-spacing:0;text-indent:0">I</div><div class="t" style="left:72.01px;top:653.96px;font-size:18px;line-height:18px;color:#1a1a1a;transform:scaleX(0.9456);transform-origin:0 0;">INT_ARRAY_CHAN</div><div style="position:absolute;left:35px;top:686.7px;width:13px;height:1px;box-sizing:border-box;border-top:1px dotted #a0a0a0"></div><div style="position:absolute;left:48px;top:676.7px;width:18px;height:18px;box-sizing:border-box;background:#fff;border:1.5px solid #a040a0;box-shadow:inset 0 2px 0 #000"></div><div style="position:absolute;left:48.5px;top:676.5px;width:18px;height:18px;text-align:center;font-family:'Liberation Serif',serif;font-weight:bold;font-size:17px;line-height:19px;color:#000;letter-spacing:0;text-indent:0">R</div><div class="t" style="left:72.93px;top:676.96px;font-size:18px;line-height:18px;color:#1a1a1a;transform:scaleX(0.9660);transform-origin:0 0;">PACK_TEST</div><div style="position:absolute;left:35px;top:709.2px;width:13px;height:1px;box-sizing:border-box;border-top:1px dotted #a0a0a0"></div><div style="position:absolute;left:48px;top:699.2px;width:18px;height:18px;box-sizing:border-box;background:#fff;border:1.5px solid #a040a0;box-shadow:inset 0 2px 0 #000"></div><div style="position:absolute;left:48.5px;top:699.0px;width:18px;height:18px;text-align:center;font-family:'Liberation Serif',serif;font-weight:bold;font-size:17px;line-height:19px;color:#000;letter-spacing:0;text-indent:0">R</div><div class="t" style="left:72.95px;top:698.96px;font-size:18px;line-height:18px;color:#1a1a1a;transform:scaleX(0.9491);transform-origin:0 0;">REAL1</div></div><div style="position:absolute;left:265px;top:185px;width:2.2px;height:272px;box-sizing:border-box;background:#7a7a7a;border-radius:1px"></div><div style="position:absolute;left:35px;top:891px;width:71px;height:2.5px;box-sizing:border-box;background:#7a7a7a;border-radius:1px"></div><div class="t" style="left:301.90px;top:167.16px;font-size:18px;line-height:18px;color:#1a1a1a;transform:scaleX(0.9674);transform-origin:0 0;">Type:</div><div style="position:absolute;left:361px;top:163px;width:99px;height:27px;box-sizing:border-box;background:#f0f0f0;border-top:2px solid #7a7a7a;border-left:2px solid #7a7a7a;border-right:1px solid #fff;border-bottom:1px solid #fff;box-shadow:inset -1px -1px 0 #e3e3e3, inset 1px 1px 0 #c8c8c8"></div><div class="t" style="left:369.60px;top:167.56px;font-size:18px;line-height:18px;color:#1a1a1a;transform:scaleX(1.0029);transform-origin:0 0;">Real</div><div style="position:absolute;left:471px;top:163px;width:68.5px;height:28px;box-sizing:border-box;background:#fff;border-top:2px solid #7a7a7a;border-left:2px solid #7a7a7a;border-right:1px solid #fff;border-bottom:1px solid #fff;box-shadow:inset -1px -1px 0 #e3e3e3, inset 1px 1px 0 #c8c8c8"></div><div class="t" style="left:475.28px;top:168.76px;font-size:18px;line-height:18px;color:#1a1a1a;transform:scaleX(1.0250);transform-origin:0 0;">Out</div><div style="position:absolute;left:517.5px;top:165px;width:21px;height:24.5px;box-sizing:border-box;background:#f0f0f0;border-top:1px solid #fff;border-left:1px solid #fff;border-right:2px solid #808080;border-bottom:2px solid #808080;box-shadow:inset 1px 1px 0 #e8e8e8"></div><svg style="position:absolute;left:523.00px;top:175.50px" width="10" height="5.0" viewBox="0 0 10 5.0"><path d="M0 0H10L5.0 5.0z" fill="#000"/></svg><div class="t" style="left:300.96px;top:198.06px;font-size:18px;line-height:18px;color:#1a1a1a;transform:scaleX(0.9392);transform-origin:0 0;">Name:</div><div style="position:absolute;left:361px;top:194px;width:580px;height:26px;box-sizing:border-box;background:#f0f0f0;border-top:2px solid #7a7a7a;border-left:2px solid #7a7a7a;border-right:1px solid #fff;border-bottom:1px solid #fff;box-shadow:inset -1px -1px 0 #e3e3e3, inset 1px 1px 0 #c8c8c8"></div><div class="t" style="left:369.19px;top:199.46px;font-size:18px;line-height:18px;color:#1a1a1a;transform:scaleX(0.9119);transform-origin:0 0;">CHAN1</div><div style="position:absolute;left:301px;top:257px;width:650px;height:650px;box-sizing:border-box;background:#f0f0f0;border-top:1.5px solid #fff;border-left:1.5px solid #fff;border-right:2px solid #808080;border-bottom:2px solid #808080;box-shadow:inset 1px 1px 0 #e3e3e3"></div><div style="position:absolute;left:305px;top:231px;width:58px;height:27px;box-sizing:border-box;background:#f0f0f0;border-top:1px solid #fff;border-left:1px solid #fff;border-right:2px solid #808080;box-shadow:inset 1px 1px 0 #e3e3e3"></div><div class="t" style="left:310.00px;top:235.26px;font-size:18px;line-height:18px;color:#1a1a1a;transform:scaleX(0.9973);transform-origin:0 0;">Main</div><div style="position:absolute;left:365px;top:231px;width:67px;height:27px;box-sizing:border-box;background:#f0f0f0;border-top:1px solid #fff;border-left:1px solid #fff;border-right:2px solid #808080;box-shadow:inset 1px 1px 0 #e3e3e3"></div><div class="t" style="left:370.90px;top:235.26px;font-size:18px;line-height:18px;color:#1a1a1a;transform:scaleX(0.9464);transform-origin:0 0;">Alarms</div><div style="position:absolute;left:433px;top:231px;width:59px;height:27px;box-sizing:border-box;background:#f0f0f0;border-top:1px solid #fff;border-left:1px solid #fff;border-right:2px solid #808080;box-shadow:inset 1px 1px 0 #e3e3e3"></div><div class="t" style="left:439.24px;top:235.26px;font-size:18px;line-height:18px;color:#1a1a1a;transform:scaleX(0.9609);transform-origin:0 0;">Limits</div><div style="position:absolute;left:493px;top:231px;width:88px;height:27px;box-sizing:border-box;background:#f0f0f0;border-top:1px solid #fff;border-left:1px solid #fff;border-right:none;box-shadow:inset 1px 1px 0 #e3e3e3"></div><div class="t" style="left:499.12px;top:235.26px;font-size:18px;line-height:18px;color:#1a1a1a;transform:scaleX(0.9750);transform-origin:0 0;">Hardware</div><div style="position:absolute;left:690px;top:231px;width:58px;height:27px;box-sizing:border-box;background:#f0f0f0;border-top:1px solid #fff;border-left:1px solid #fff;border-right:2px solid #808080;box-shadow:inset 1px 1px 0 #e3e3e3"></div><div class="t" style="left:694.70px;top:235.26px;font-size:18px;line-height:18px;color:#1a1a1a;transform:scaleX(0.9956);transform-origin:0 0;">String</div><div style="position:absolute;left:750px;top:231px;width:58px;height:27px;box-sizing:border-box;background:#f0f0f0;border-top:1px solid #fff;border-left:1px solid #fff;border-right:2px solid #808080;box-shadow:inset 1px 1px 0 #e3e3e3"></div><div class="t" style="left:756.09px;top:235.26px;font-size:18px;line-height:18px;color:#1a1a1a;transform:scaleX(0.9111);transform-origin:0 0;">Misc</div><div style="position:absolute;left:810px;top:231px;width:72px;height:27px;box-sizing:border-box;background:#f0f0f0;border-top:1px solid #fff;border-left:1px solid #fff;border-right:2px solid #808080;box-shadow:inset 1px 1px 0 #e3e3e3"></div><div class="t" style="left:814.41px;top:235.26px;font-size:18px;line-height:18px;color:#1a1a1a;transform:scaleX(0.9948);transform-origin:0 0;">Interest</div><div style="position:absolute;left:581px;top:229px;width:109px;height:30px;box-sizing:border-box;background:#f0f0f0;border-top:1px solid #fff;border-left:1px solid #fff;border-right:2px solid #808080;box-shadow:inset 1px 1px 0 #e3e3e3"></div><div class="t" style="left:589.09px;top:233.46px;font-size:18px;line-height:18px;color:#1a1a1a;transform:scaleX(1.0056);transform-origin:0 0;">Conversion</div><div class="t" style="left:315.41px;top:296.06px;font-size:18px;line-height:18px;color:#1a1a1a;transform:scaleX(0.9868);transform-origin:0 0;">Cparams:</div><div style="position:absolute;left:426px;top:291.5px;width:80px;height:27px;box-sizing:border-box;background:#f0f0f0;border-top:2px solid #7a7a7a;border-left:2px solid #7a7a7a;border-right:1px solid #fff;border-bottom:1px solid #fff;box-shadow:inset -1px -1px 0 #e3e3e3, inset 1px 1px 0 #c8c8c8"></div><div class="t" style="left:433.67px;top:296.66px;font-size:18px;line-height:18px;color:#1a1a1a;transform:scaleX(0.9300);transform-origin:0 0;">6</div><div style="position:absolute;left:316px;top:325px;width:343px;height:344px;box-sizing:border-box;border-top:2px solid #a0a0a0;border-left:2px solid #a0a0a0;border-right:1px solid #fff;border-bottom:1px solid #fff"></div><div class="t" style="left:342.15px;top:332.26px;font-size:18px;line-height:18px;color:#1a1a1a;transform:scaleX(1.0462);transform-origin:0 0;">1:</div><div style="position:absolute;left:377.5px;top:328.5px;width:99px;height:27px;box-sizing:border-box;background:#fff;border-top:2px solid #7a7a7a;border-left:2px solid #7a7a7a;border-right:1px solid #fff;border-bottom:1px solid #fff;box-shadow:inset -1px -1px 0 #e3e3e3, inset 1px 1px 0 #c8c8c8"></div><div class="t" style="left:385.67px;top:332.56px;font-size:18px;line-height:18px;color:#1a1a1a;transform:scaleX(1.0304);transform-origin:0 0;">1.1</div><div style="position:absolute;left:487.5px;top:328.5px;width:139px;height:27.5px;box-sizing:border-box;background:#fff;border-top:2px solid #7a7a7a;border-left:2px solid #7a7a7a;border-right:1px solid #fff;border-bottom:1px solid #fff;box-shadow:inset -1px -1px 0 #e3e3e3, inset 1px 1px 0 #c8c8c8"></div><div class="t" style="left:492.80px;top:333.56px;font-size:18px;line-height:18px;color:#1a1a1a;transform:scaleX(1.0136);transform-origin:0 0;">Value</div><div style="position:absolute;left:604.5px;top:330.5px;width:20px;height:23.5px;box-sizing:border-box;background:#f0f0f0;border-top:1px solid #fff;border-left:1px solid #fff;border-right:2px solid #808080;border-bottom:2px solid #808080;box-shadow:inset 1px 1px 0 #e8e8e8"></div><svg style="position:absolute;left:609.60px;top:340.05px" width="9.4" height="4.7" viewBox="0 0 9.4 4.7"><path d="M0 0H9.4L4.7 4.7z" fill="#000"/></svg><div class="t" style="left:342.15px;top:363.51px;font-size:18px;line-height:18px;color:#1a1a1a;transform:scaleX(1.0462);transform-origin:0 0;">2:</div><div style="position:absolute;left:377.5px;top:359.75px;width:99px;height:27px;box-sizing:border-box;background:#fff;border-top:2px solid #7a7a7a;border-left:2px solid #7a7a7a;border-right:1px solid #fff;border-bottom:1px solid #fff;box-shadow:inset -1px -1px 0 #e3e3e3, inset 1px 1px 0 #c8c8c8"></div><div class="t" style="left:385.63px;top:363.81px;font-size:18px;line-height:18px;color:#1a1a1a;transform:scaleX(1.0696);transform-origin:0 0;">2.2</div><div style="position:absolute;left:487.5px;top:359.75px;width:139px;height:27.5px;box-sizing:border-box;background:#fff;border-top:2px solid #7a7a7a;border-left:2px solid #7a7a7a;border-right:1px solid #fff;border-bottom:1px solid #fff;box-shadow:inset -1px -1px 0 #e3e3e3, inset 1px 1px 0 #c8c8c8"></div><div class="t" style="left:492.80px;top:364.81px;font-size:18px;line-height:18px;color:#1a1a1a;transform:scaleX(1.0136);transform-origin:0 0;">Value</div><div style="position:absolute;left:604.5px;top:361.75px;width:20px;height:23.5px;box-sizing:border-box;background:#f0f0f0;border-top:1px solid #fff;border-left:1px solid #fff;border-right:2px solid #808080;border-bottom:2px solid #808080;box-shadow:inset 1px 1px 0 #e8e8e8"></div><svg style="position:absolute;left:609.60px;top:371.30px" width="9.4" height="4.7" viewBox="0 0 9.4 4.7"><path d="M0 0H9.4L4.7 4.7z" fill="#000"/></svg><div class="t" style="left:342.15px;top:394.76px;font-size:18px;line-height:18px;color:#1a1a1a;transform:scaleX(1.0462);transform-origin:0 0;">3:</div><div style="position:absolute;left:377.5px;top:391.0px;width:99px;height:27px;box-sizing:border-box;background:#fff;border-top:2px solid #7a7a7a;border-left:2px solid #7a7a7a;border-right:1px solid #fff;border-bottom:1px solid #fff;box-shadow:inset -1px -1px 0 #e3e3e3, inset 1px 1px 0 #c8c8c8"></div><div class="t" style="left:385.77px;top:395.06px;font-size:18px;line-height:18px;color:#1a1a1a;transform:scaleX(0.9300);transform-origin:0 0;">2</div><div style="position:absolute;left:487.5px;top:391.0px;width:139px;height:27.5px;box-sizing:border-box;background:#fff;border-top:2px solid #7a7a7a;border-left:2px solid #7a7a7a;border-right:1px solid #fff;border-bottom:1px solid #fff;box-shadow:inset -1px -1px 0 #e3e3e3, inset 1px 1px 0 #c8c8c8"></div><div class="t" style="left:491.85px;top:396.06px;font-size:18px;line-height:18px;color:#1a1a1a;transform:scaleX(0.9486);transform-origin:0 0;">Chix</div><div style="position:absolute;left:604.5px;top:393.0px;width:20px;height:23.5px;box-sizing:border-box;background:#f0f0f0;border-top:1px solid #fff;border-left:1px solid #fff;border-right:2px solid #808080;border-bottom:2px solid #808080;box-shadow:inset 1px 1px 0 #e8e8e8"></div><svg style="position:absolute;left:609.60px;top:402.55px" width="9.4" height="4.7" viewBox="0 0 9.4 4.7"><path d="M0 0H9.4L4.7 4.7z" fill="#000"/></svg><div class="t" style="left:343.20px;top:426.01px;font-size:18px;line-height:18px;color:#1a1a1a;transform:scaleX(0.9714);transform-origin:0 0;">4:</div><div style="position:absolute;left:377.5px;top:422.25px;width:99px;height:27px;box-sizing:border-box;background:#fff;border-top:2px solid #7a7a7a;border-left:2px solid #7a7a7a;border-right:1px solid #fff;border-bottom:1px solid #fff;box-shadow:inset -1px -1px 0 #e3e3e3, inset 1px 1px 0 #c8c8c8"></div><div class="t" style="left:386.70px;top:426.31px;font-size:18px;line-height:18px;color:#1a1a1a;transform:scaleX(0.9300);transform-origin:0 0;">4</div><div style="position:absolute;left:487.5px;top:422.25px;width:139px;height:27.5px;box-sizing:border-box;background:#fff;border-top:2px solid #7a7a7a;border-left:2px solid #7a7a7a;border-right:1px solid #fff;border-bottom:1px solid #fff;box-shadow:inset -1px -1px 0 #e3e3e3, inset 1px 1px 0 #c8c8c8"></div><div class="t" style="left:491.80px;top:427.31px;font-size:18px;line-height:18px;color:#1a1a1a;transform:scaleX(1.0049);transform-origin:0 0;">Reference</div><div style="position:absolute;left:604.5px;top:424.25px;width:20px;height:23.5px;box-sizing:border-box;background:#f0f0f0;border-top:1px solid #fff;border-left:1px solid #fff;border-right:2px solid #808080;border-bottom:2px solid #808080;box-shadow:inset 1px 1px 0 #e8e8e8"></div><svg style="position:absolute;left:609.60px;top:433.80px" width="9.4" height="4.7" viewBox="0 0 9.4 4.7"><path d="M0 0H9.4L4.7 4.7z" fill="#000"/></svg><div class="t" style="left:342.15px;top:457.26px;font-size:18px;line-height:18px;color:#1a1a1a;transform:scaleX(1.0462);transform-origin:0 0;">5:</div><div style="position:absolute;left:377.5px;top:453.5px;width:99px;height:27px;box-sizing:border-box;background:#fff;border-top:2px solid #7a7a7a;border-left:2px solid #7a7a7a;border-right:1px solid #fff;border-bottom:1px solid #fff;box-shadow:inset -1px -1px 0 #e3e3e3, inset 1px 1px 0 #c8c8c8"></div><div class="t" style="left:385.65px;top:457.56px;font-size:18px;line-height:18px;color:#1a1a1a;transform:scaleX(1.0500);transform-origin:0 0;">17</div><div style="position:absolute;left:487.5px;top:453.5px;width:139px;height:27.5px;box-sizing:border-box;background:#fff;border-top:2px solid #7a7a7a;border-left:2px solid #7a7a7a;border-right:1px solid #fff;border-bottom:1px solid #fff;box-shadow:inset -1px -1px 0 #e3e3e3, inset 1px 1px 0 #c8c8c8"></div><div class="t" style="left:491.80px;top:458.56px;font-size:18px;line-height:18px;color:#1a1a1a;transform:scaleX(1.0049);transform-origin:0 0;">Reference</div><div style="position:absolute;left:604.5px;top:455.5px;width:20px;height:23.5px;box-sizing:border-box;background:#f0f0f0;border-top:1px solid #fff;border-left:1px solid #fff;border-right:2px solid #808080;border-bottom:2px solid #808080;box-shadow:inset 1px 1px 0 #e8e8e8"></div><svg style="position:absolute;left:609.60px;top:465.05px" width="9.4" height="4.7" viewBox="0 0 9.4 4.7"><path d="M0 0H9.4L4.7 4.7z" fill="#000"/></svg><div class="t" style="left:342.15px;top:488.51px;font-size:18px;line-height:18px;color:#1a1a1a;transform:scaleX(1.0462);transform-origin:0 0;">6:</div><div style="position:absolute;left:377.5px;top:484.75px;width:99px;height:27px;box-sizing:border-box;background:#fff;border-top:2px solid #7a7a7a;border-left:2px solid #7a7a7a;border-right:1px solid #fff;border-bottom:1px solid #fff;box-shadow:inset -1px -1px 0 #e3e3e3, inset 1px 1px 0 #c8c8c8"></div><div class="t" style="left:385.68px;top:488.81px;font-size:18px;line-height:18px;color:#1a1a1a;transform:scaleX(1.0167);transform-origin:0 0;">21</div><div style="position:absolute;left:487.5px;top:484.75px;width:139px;height:27.5px;box-sizing:border-box;background:#fff;border-top:2px solid #7a7a7a;border-left:2px solid #7a7a7a;border-right:1px solid #fff;border-bottom:1px solid #fff;box-shadow:inset -1px -1px 0 #e3e3e3, inset 1px 1px 0 #c8c8c8"></div><div class="t" style="left:491.80px;top:489.81px;font-size:18px;line-height:18px;color:#1a1a1a;transform:scaleX(1.0049);transform-origin:0 0;">Reference</div><div style="position:absolute;left:604.5px;top:486.75px;width:20px;height:23.5px;box-sizing:border-box;background:#f0f0f0;border-top:1px solid #fff;border-left:1px solid #fff;border-right:2px solid #808080;border-bottom:2px solid #808080;box-shadow:inset 1px 1px 0 #e8e8e8"></div><svg style="position:absolute;left:609.60px;top:496.30px" width="9.4" height="4.7" viewBox="0 0 9.4 4.7"><path d="M0 0H9.4L4.7 4.7z" fill="#000"/></svg><div style="position:absolute;left:638.5px;top:331px;width:18.5px;height:19px;box-sizing:border-box;background:#f0f0f0;border-top:1px solid #fff;border-left:1px solid #fff;border-right:1.5px solid #8a8a8a;border-bottom:1.5px solid #8a8a8a"></div><svg style="position:absolute;left:642.80px;top:337.60px" width="10" height="5.0" viewBox="0 0 10 5.0"><path d="M0 5.0H10L5.0 0z" fill="#000"/></svg><div style="position:absolute;left:638.5px;top:351px;width:19px;height:294px;box-sizing:border-box;border-left:1px solid #fff;border-right:2px solid #a0a0a0;border-bottom:2px solid #808080"></div><div style="position:absolute;left:638.5px;top:646px;width:19px;height:21px;box-sizing:border-box;background:#f0f0f0;border-top:1px solid #fff;border-left:1px solid #fff;border-right:2px solid #808080;border-bottom:2px solid #808080;box-shadow:inset 1px 1px 0 #e8e8e8"></div><svg style="position:absolute;left:643.00px;top:653.75px" width="9" height="4.5" viewBox="0 0 9 4.5"><path d="M0 0H9L4.5 4.5z" fill="#000"/></svg><div style="position:absolute;left:776px;top:298px;width:16.5px;height:16px;box-sizing:border-box;background:#fff;border-top:2.5px solid #787878;border-left:2.5px solid #787878;border-right:1px solid #fff;border-bottom:1px solid #fff;box-shadow:inset -1px -1px 0 #e3e3e3"></div><div class="t" style="left:799.30px;top:297.16px;font-size:18px;line-height:18px;color:#1a1a1a;">Convert</div><div class="t" style="left:674.29px;top:327.26px;font-size:18px;line-height:18px;color:#1a1a1a;transform:scaleX(1.0069);transform-origin:0 0;">Intercept:</div><div style="position:absolute;left:776px;top:323px;width:140px;height:28px;box-sizing:border-box;background:#fff;border-top:2px solid #7a7a7a;border-left:2px solid #7a7a7a;border-right:1px solid #fff;border-bottom:1px solid #fff;box-shadow:inset -1px -1px 0 #e3e3e3, inset 1px 1px 0 #c8c8c8"></div><div class="t" style="left:784.17px;top:327.36px;font-size:18px;line-height:18px;color:#1a1a1a;transform:scaleX(0.9300);transform-origin:0 0;">0</div><div class="t" style="left:675.31px;top:358.16px;font-size:18px;line-height:18px;color:#1a1a1a;transform:scaleX(0.9939);transform-origin:0 0;">Slope:</div><div style="position:absolute;left:776px;top:354.5px;width:140px;height:28px;box-sizing:border-box;background:#fff;border-top:2px solid #7a7a7a;border-left:2px solid #7a7a7a;border-right:1px solid #fff;border-bottom:1px solid #fff;box-shadow:inset -1px -1px 0 #e3e3e3, inset 1px 1px 0 #c8c8c8"></div><div class="t" style="left:784.17px;top:358.86px;font-size:18px;line-height:18px;color:#1a1a1a;transform:scaleX(0.9300);transform-origin:0 0;">0</div><div class="t" style="left:314.02px;top:701.76px;font-size:18px;line-height:18px;color:#1a1a1a;transform:scaleX(0.9900);transform-origin:0 0;">Int to Ext Routine:</div><div style="position:absolute;left:506px;top:698.5px;width:410px;height:89.5px;box-sizing:border-box;background:#fff;border-top:2px solid #7a7a7a;border-left:2px solid #7a7a7a;border-right:1px solid #fff;border-bottom:1px solid #fff;box-shadow:inset -1px -1px 0 #e3e3e3, inset 1px 1px 0 #c8c8c8"></div><div style="position:absolute;left:894px;top:701px;width:20px;height:85px;box-sizing:border-box;background:#f0f0f0"></div><svg style="position:absolute;left:898.50px;top:708.00px" width="11" height="7" viewBox="0 0 11 7"><path d="M0 7H11L5.5 0z" fill="#a0a0a0"/></svg><svg style="position:absolute;left:898.50px;top:773.00px" width="11" height="7" viewBox="0 0 11 7"><path d="M0 0H11L5.5 7z" fill="#a0a0a0"/></svg><div class="t" style="left:315.02px;top:796.46px;font-size:18px;line-height:18px;color:#1a1a1a;transform:scaleX(0.9752);transform-origin:0 0;">Ext to Int Routine:</div><div style="position:absolute;left:506px;top:792px;width:410px;height:89.5px;box-sizing:border-box;background:#fff;border-top:2px solid #7a7a7a;border-left:2px solid #7a7a7a;border-right:1px solid #fff;border-bottom:1px solid #fff;box-shadow:inset -1px -1px 0 #e3e3e3, inset 1px 1px 0 #c8c8c8"></div><div style="position:absolute;left:894px;top:794.5px;width:20px;height:86px;box-sizing:border-box;background:#f0f0f0"></div><svg style="position:absolute;left:898.50px;top:801.50px" width="11" height="7" viewBox="0 0 11 7"><path d="M0 7H11L5.5 0z" fill="#a0a0a0"/></svg><svg style="position:absolute;left:898.50px;top:866.50px" width="11" height="7" viewBox="0 0 11 7"><path d="M0 0H11L5.5 7z" fill="#a0a0a0"/></svg><div class="t" style="left:514.00px;top:796.76px;font-size:18px;line-height:18px;color:#1a1a1a;transform:scaleX(0.9962);transform-origin:0 0;">conv2:2,conv_crash</div><div style="position:absolute;left:12px;top:909.5px;width:829px;height:26px;box-sizing:border-box;border-top:2px solid #808080;border-left:2px solid #808080;border-right:1px solid #fff;border-bottom:1px solid #fff"></div><div style="position:absolute;left:852px;top:909.5px;width:89px;height:26px;box-sizing:border-box;border-top:2px solid #808080;border-left:2px solid #808080;border-right:1px solid #fff;border-bottom:1px solid #fff"></div><div class="t" style="left:860.07px;top:913.76px;font-size:18px;line-height:18px;color:#1a1a1a;transform:scaleX(0.9316);transform-origin:0 0;">DECIMAL</div>
</body></html>
